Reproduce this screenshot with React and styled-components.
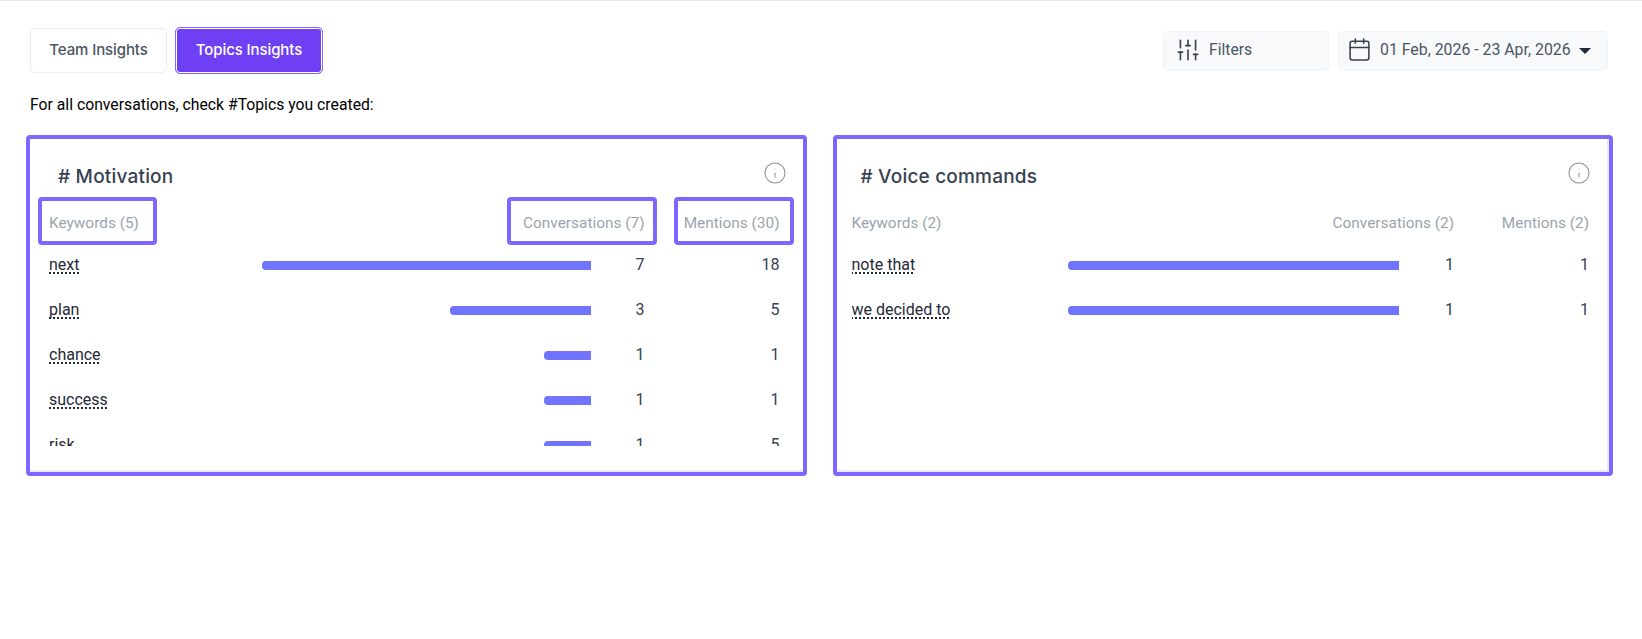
import styled, { createGlobalStyle } from "styled-components";
import { SlidersVertical, Calendar, Info } from "lucide-react";

const topics = [
    {
        name: "Motivation",
        counts: { keywords: 5, conversations: 7, mentions: 30 },
        marked: true,
        keywords: [
            { word: "next", conversations: 7, mentions: 18 },
            { word: "plan", conversations: 3, mentions: 5 },
            { word: "chance", conversations: 1, mentions: 1 },
            { word: "success", conversations: 1, mentions: 1 },
            { word: "risk", conversations: 1, mentions: 5 },
        ],
    },
    {
        name: "Voice commands",
        counts: { keywords: 2, conversations: 2, mentions: 2 },
        keywords: [
            { word: "note that", conversations: 1, mentions: 1 },
            { word: "we decided to", conversations: 1, mentions: 1 },
        ],
    },
];

function TopicPanel({ topic }) {
    const { name, counts, marked, keywords } = topic;
    const highest = Math.max(...keywords.map((k) => k.conversations));

    return (
        <Panel $marked={marked}>
            <PanelHead $marked={marked}>
                <PanelTitle># {name}</PanelTitle>
                <Info size={24} strokeWidth={1.05} color="#8b909a" />
            </PanelHead>
            <TableArea $marked={marked}>
                <Grid $marked={marked}>
                    <HeadCell $mark={marked} $left={11} $right={18}>Keywords ({counts.keywords})</HeadCell>
                    <span />
                    <HeadCell $end $mark={marked} $left={16} $right={12}>Conversations ({counts.conversations})</HeadCell>
                    <HeadCell $end $mark={marked} $left={10} $right={14}>Mentions ({counts.mentions})</HeadCell>
                </Grid>
                <Rows>
                    {keywords.map((k) => (
                        <Row key={k.word} $marked={marked}>
                            <Word>{k.word}</Word>
                            <BarTrack>
                                <Bar style={{ width: `${(k.conversations / highest) * 100}%` }} />
                            </BarTrack>
                            <Num>{k.conversations}</Num>
                            <Num>{k.mentions}</Num>
                        </Row>
                    ))}
                </Rows>
            </TableArea>
        </Panel>
    );
}

export default function App() {
    return (
        <>
            <GlobalStyle />
            <Page>
                <Toolbar>
                    <Tabs>
                        <Tab>Team Insights</Tab>
                        <Tab $active>Topics Insights</Tab>
                    </Tabs>
                    <Controls>
                        <FilterButton>
                            <SlidersVertical size={26} strokeWidth={1.5} color="#374151" />
                            Filters
                        </FilterButton>
                        <DateButton>
                            <Calendar size={25} strokeWidth={1.5} color="#374151" />
                            01 Feb, 2026 - 23 Apr, 2026
                            <Caret />
                        </DateButton>
                    </Controls>
                </Toolbar>
                <Intro>For all conversations, check #Topics you created:</Intro>
                <Panels>
                    {topics.map((t) => <TopicPanel key={t.name} topic={t} />)}
                </Panels>
            </Page>
        </>
    );
}

const GlobalStyle = createGlobalStyle`
    body {
        margin: 0;
        background: #ffffff;
        font-family: Roboto, sans-serif;
    }
`;

const Page = styled.div`
    box-sizing: border-box;
    height: 639px;
    padding: 26px 29px 0 26px;
    border-top: 1px solid #e8e9ef;
`;

const Toolbar = styled.div`
    display: flex;
    justify-content: space-between;
    align-items: center;
    padding: 0 5px 0 4px;
`;

const Tabs = styled.div`
    display: flex;
    align-items: center;
    gap: 8px;
`;

const Tab = styled.button`
    box-sizing: border-box;
    height: ${(p) => (p.$active ? "47px" : "45px")};
    width: ${(p) => (p.$active ? "148px" : "137px")};
    padding: 0 0 3px;
    border-radius: 5px;
    font-family: Inter, sans-serif;
    font-size: 15px;
    font-weight: 500;
    letter-spacing: -0.1px;
    color: ${(p) => (p.$active ? "#ffffff" : "#4b5563")};
    background: ${(p) => (p.$active ? "#6e3ff3" : "#ffffff")};
    border: 1px solid #eceef1;
    ${(p) => p.$active && `
        border: 1px solid #7f66ff;
        box-shadow: inset 0 0 0 1px #ffffff;
        outline: none;
    `}
`;

const Controls = styled.div`
    display: flex;
    gap: 9px;
`;

const FilterButton = styled.div`
    box-sizing: border-box;
    display: flex;
    align-items: center;
    gap: 8px;
    width: 166px;
    height: 40px;
    padding: 0 0 2px 11px;
    background: #f8f9fb;
    border: 1px solid #f1f3f6;
    border-radius: 5px;
    font-size: 15.7px;
    color: #4b5563;
`;

const DateButton = styled(FilterButton)`
    width: 270px;
    gap: 8px;
    padding-left: 8px;
    font-size: 15.85px;
`;

const Caret = styled.span`
    width: 0;
    height: 0;
    margin-left: 0;
    margin-top: 3px;
    border-left: 6px solid transparent;
    border-right: 6px solid transparent;
    border-top: 6px solid #1f2937;
`;

const Intro = styled.p`
    margin: 16px 0 0 4px;
    height: 30px;
    line-height: 30px;
    font-size: 15.75px;
    color: #000000;
`;

const Panels = styled.div`
    display: flex;
    gap: 26px;
    margin-top: 15px;
`;

const Panel = styled.section`
    box-sizing: border-box;
    flex: 1;
    height: 341px;
    border: 4px solid #7f66ff;
    border-radius: 4px;
    box-shadow: inset ${(p) => (p.$marked ? "0" : "-2px")} -2px 0 #e9e9ec;
`;

const PanelHead = styled.div`
    display: flex;
    justify-content: space-between;
    align-items: flex-start;
    height: 58px;
    padding: 22px ${(p) => (p.$marked ? "16px" : "18px")} 0 ${(p) => (p.$marked ? "28px" : "24px")};
    box-sizing: border-box;
`;

const PanelTitle = styled.h2`
    margin: 0;
    margin-top: 4px;
    font-family: Inter, sans-serif;
    font-size: 19px;
    letter-spacing: 0.2px;
    line-height: 24px;
    font-weight: 500;
    color: #374151;
`;

const TableArea = styled.div`
    padding: 0 ${(p) => (p.$marked ? "23px" : "20px")} 0 ${(p) => (p.$marked ? "19px" : "15px")};
`;

const Grid = styled.div`
    display: grid;
    grid-template-columns: ${(p) => (p.$marked ? "29.1% 45.1%" : "29.3% 45%")} minmax(0, 1fr) 135px;
    align-items: center;
`;

const HeadCell = styled.div`
    position: relative;
    box-sizing: border-box;
    height: 46px;
    padding-top: 6px;
    line-height: 40px;
    font-size: 15.4px;
    color: #9ca3af;
    white-space: nowrap;
    justify-self: ${(p) => (p.$end ? "end" : "start")};
    ${(p) => p.$mark && `
        &::after {
            content: "";
            position: absolute;
            top: 0;
            bottom: -2px;
            left: -${p.$left}px;
            right: -${p.$right}px;
            border: 4px solid #7f66ff;
            border-radius: 4px;
        }
    `}
`;

const Rows = styled.div`
    height: 203px;
    overflow: hidden;
`;

const Row = styled(Grid)`
    height: 45px;
`;

const Word = styled.div`
    padding-bottom: 2px;
    font-size: 16px;
    color: #1f2937;
    text-decoration: underline dotted #1f2937 2px;
    text-underline-offset: 2px;
    text-decoration-skip-ink: none;
`;

const BarTrack = styled.div`
    display: flex;
    justify-content: flex-end;
`;

const Bar = styled.div`
    height: 9px;
    background: #7074ff;
    border-radius: 4px 0 0 4px;
`;

const Num = styled.div`
    padding-bottom: 2px;
    font-size: 16px;
    color: #374151;
    text-align: right;
`;
